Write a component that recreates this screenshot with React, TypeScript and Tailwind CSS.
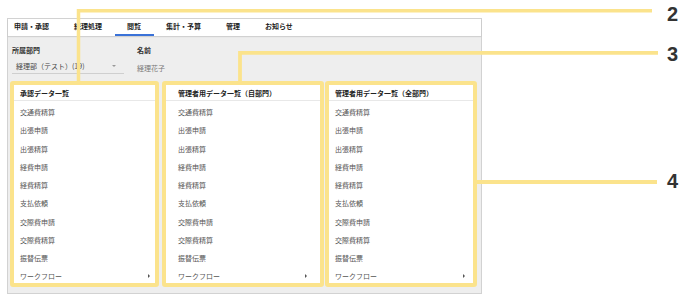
import React from "react";

const items = [
  "交通費精算",
  "出張申請",
  "出張精算",
  "経費申請",
  "経費精算",
  "支払依頼",
  "交際費申請",
  "交際費精算",
  "振替伝票",
];

const tabs = ["申請・承認", "経理処理", "閲覧", "集計・予算", "管理", "お知らせ"];

function Card({
  title,
  width,
  ml,
  pl,
  pr,
}: {
  title: string;
  width: string;
  ml: string;
  pl: string;
  pr: string;
}) {
  return (
    <div
      className={`${width} ${ml} h-[206px] border-4 border-[#fbe38c] rounded-[3px] bg-white overflow-hidden flex flex-col`}
    >
      <div className={`h-[16px] shrink-0 border-b border-[#e8e8e8] flex items-center ${pl}`}>
        <span className="text-[7px] leading-[10px] font-bold text-[#222]">{title}</span>
      </div>
      <div className="pt-[2px] flex flex-col">
        {items.map((t) => (
          <div key={t} className={`h-[18.25px] shrink-0 flex items-center ${pl}`}>
            <span className="text-[7px] leading-[10px] text-[#555]">{t}</span>
          </div>
        ))}
        <div className={`h-[18.25px] shrink-0 flex items-center justify-between ${pl} ${pr}`}>
          <span className="text-[7px] leading-[10px] text-[#555]">ワークフロー</span>
          <span className="w-0 h-0 border-y-[2px] border-y-transparent border-l-[2px] border-l-[#555]" />
        </div>
      </div>
    </div>
  );
}

export default function App() {
  return (
    <div
      className="relative w-[689px] h-[298px] bg-white overflow-hidden leading-[10px]"
      style={{ fontFamily: '"Noto Sans CJK JP", "Noto Sans", sans-serif' }}
    >
      <div className="ml-[7px] mt-[18px] w-[475px] h-[276px] border border-[#d2d2d2] bg-[#eeeeee] flex flex-col">
        {/* tab bar */}
        <div className="h-[17px] shrink-0 bg-white flex shadow-[0_1px_1px_rgba(0,0,0,0.12)]">
          {tabs.map((t, i) => (
            <div
              key={t}
              className={`relative h-full flex items-start pt-[2px] ${i === 0 ? "pl-[6px] pr-[12.5px]" : "px-[12.5px]"}`}
            >
              <span className="text-[7px] leading-[10px] font-bold text-[#222] whitespace-nowrap">{t}</span>
              {t === "閲覧" && (
                <div className="absolute left-0 right-0 bottom-[0.5px] h-[2px] bg-[#3a72d8]" />
              )}
            </div>
          ))}
        </div>
        {/* body */}
        <div className="flex flex-col pt-[9px]">
          <div className="flex pl-[4px]">
            <div className="w-[125px] flex flex-col">
              <span className="text-[7px] leading-[10px] font-bold text-[#333]">所属部門</span>
              <div className="mt-[3px] w-[112px] h-[16px] border-b border-[#cfcfcf] flex items-center justify-between pl-[4px] pr-[8px]">
                <span className="text-[7px] leading-[10px] text-[#444] whitespace-nowrap">経理部（テスト）(19)</span>
                <span className="w-0 h-0 border-x-[2px] border-x-transparent border-t-[2px] border-t-[#999]" />
              </div>
            </div>
            <div className="flex flex-col">
              <span className="text-[7px] leading-[10px] font-bold text-[#333]">名前</span>
              <div className="mt-[3px] h-[16px] flex items-center pt-[3px]">
                <span className="text-[7px] leading-[10px] text-[#777]">経理花子</span>
              </div>
            </div>
          </div>
          <div className="flex mt-[7px]">
            <Card title="承認データ一覧" width="w-[149px]" ml="ml-[2px]" pl="pl-[6px]" pr="pr-[5px]" />
            <Card title="管理者用データ一覧（自部門）" width="w-[162px]" ml="ml-[3px]" pl="pl-[12px]" pr="pr-[13px]" />
            <Card title="管理者用データ一覧（全部門）" width="w-[152px]" ml="ml-[1px]" pl="pl-[6px]" pr="pr-[8px]" />
          </div>
        </div>
      </div>

      {/* annotation overlay */}
      <svg
        className="absolute left-0 top-0 pointer-events-none"
        width="689"
        height="298"
        viewBox="0 0 689 298"
      >
        <polyline points="78.5,82 78.5,10.8 652,10.8" fill="none" stroke="#fbe38c" strokeWidth="3.5" />
        <polyline points="240,81 240,52.8 658,52.8" fill="none" stroke="#fbe38c" strokeWidth="3.8" />
        <line x1="476" y1="182" x2="657" y2="182" stroke="#fbe38c" strokeWidth="3.8" />
      </svg>
      <div
        className="absolute left-[667px] top-[4px] text-[20px] leading-[20px] font-bold text-[#333]"
        style={{ fontFamily: '"Liberation Sans", Arial, sans-serif' }}
      >
        2
      </div>
      <div
        className="absolute left-[667px] top-[44px] text-[20px] leading-[20px] font-bold text-[#333]"
        style={{ fontFamily: '"Liberation Sans", Arial, sans-serif' }}
      >
        3
      </div>
      <div
        className="absolute left-[667px] top-[171px] text-[20px] leading-[20px] font-bold text-[#333]"
        style={{ fontFamily: '"Liberation Sans", Arial, sans-serif' }}
      >
        4
      </div>
    </div>
  );
}
